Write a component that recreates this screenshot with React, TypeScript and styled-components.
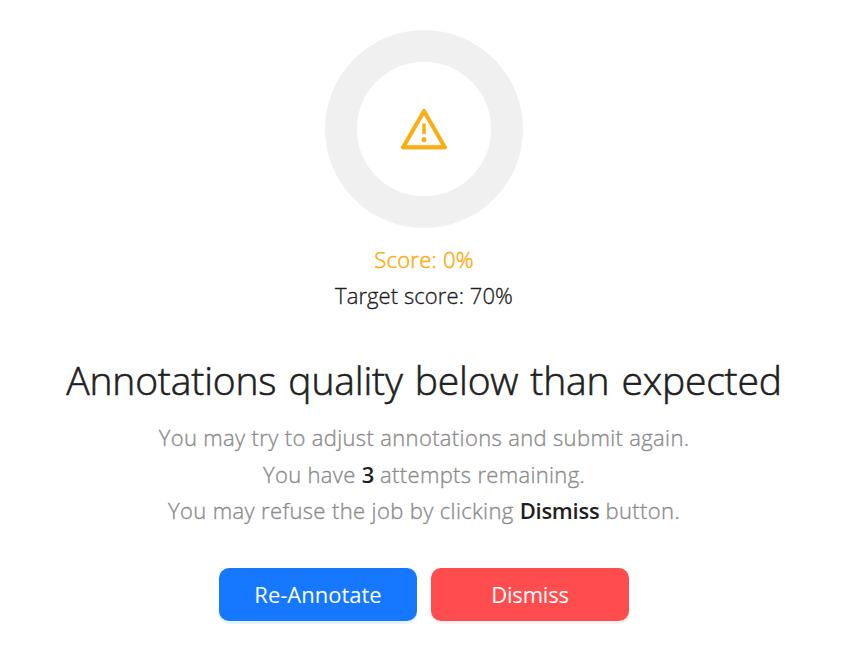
import React from "react";
import styled, { createGlobalStyle } from "styled-components";

const GlobalStyle = createGlobalStyle`
  * { box-sizing: border-box; }
  body { margin: 0; background: #fff; font-family: "Open Sans", "Noto Sans", sans-serif; color: #1f1f1f; }
`;
const Page = styled.main`
  display: flex; flex-direction: column; align-items: center;
  height: 664px; padding: 30px 0 0 1px; overflow: hidden;
`;
const Ring = styled.div`
  display: flex; align-items: center; justify-content: center;
  width: 198px; height: 198px; flex: none;
  border: 32px solid #f0f0f0; border-radius: 50%;
`;
const WarningIcon = styled.svg` width: 46px; height: 46px; fill: #faad14; stroke: #faad14; stroke-width: 6px; `;
const Text = styled.p<{ $spacing: number; $tone?: "warning" | "muted" }>`
  margin: 0; font-size: 22px; font-weight: 300; line-height: 36.5px; white-space: nowrap;
  letter-spacing: ${p => p.$spacing}px;
  -webkit-text-stroke-width: ${p => p.$tone === "warning" ? ".5px" : ".35px"};
  color: ${p => p.$tone === "warning" ? "#faad14" : p.$tone === "muted" ? "#8c8c8c" : "#1f1f1f"};
`;
const Scores = styled.div`
  display: flex; flex-direction: column; align-items: center; height: 73px; margin-top: 13px;
  ${Text} { line-height: 36.4px; }
`;
const Title = styled.h1`
  margin: 36px 0 0; font-size: 39px; font-weight: 300; line-height: 60px; white-space: nowrap;
  letter-spacing: -.16px; word-spacing: 2px; -webkit-text-stroke-width: .6px;
`;
const Details = styled.div`
  display: flex; flex-direction: column; align-items: center; height: 110px; margin-top: 9px;
`;
const Strong = styled.strong`
  font-weight: 600; color: #1f1f1f; letter-spacing: -.25px; -webkit-text-stroke-width: 0;
`;
const Actions = styled.div` display: flex; gap: 14px; margin-top: 39px; `;
const Button = styled.button<{ $danger?: boolean }>`
  width: 198px; height: 53px; padding: 0; border: 0; border-radius: 10px;
  color: #fff; font: 400 22px/53px "Open Sans", "Noto Sans", sans-serif;
  letter-spacing: ${p => p.$danger ? "-.2px" : "0"};
  background: ${p => p.$danger ? "#ff4d4f" : "#1677ff"};
  box-shadow: 0 3px 0 ${p => p.$danger ? "rgba(255,38,5,.06)" : "rgba(5,145,255,.1)"};
`;

export default function App() {
  return <>
    <GlobalStyle />
    <Page>
      <Ring>
        <WarningIcon viewBox="64 64 896 896">
          <path d="M464 720a48 48 0 1096 0 48 48 0 10-96 0zm16-304v184c0 4.400 3.600 8 8 8h48c4.400 0 8-3.600 8-8V416c0-4.400-3.600-8-8-8h-48c-4.400 0-8 3.600-8 8zm475.700 440l-416-720c-6.200-10.700-16.900-16-27.700-16s-21.600 5.300-27.700 16l-416 720C56 877.400 71.400 904 96 904h832c24.600 0 40-26.600 27.700-48zm-783.500-27.900L512 239.900l339.800 588.200H172.200z" />
        </WarningIcon>
      </Ring>
      <Scores>
        <Text $spacing={0.25} $tone="warning">Score: 0%</Text>
        <Text $spacing={0.08}>Target score: 70%</Text>
      </Scores>
      <Title>Annotations quality below than expected</Title>
      <Details>
        <Text $spacing={0.35} $tone="muted">You may try to adjust annotations and submit again.</Text>
        <Text $spacing={0.33} $tone="muted">You have <Strong>3</Strong> attempts remaining.</Text>
        <Text $spacing={0.37} $tone="muted">You may refuse the job by clicking <Strong>Dismiss</Strong> button.</Text>
      </Details>
      <Actions><Button>Re-Annotate</Button><Button $danger>Dismiss</Button></Actions>
    </Page>
  </>;
}
